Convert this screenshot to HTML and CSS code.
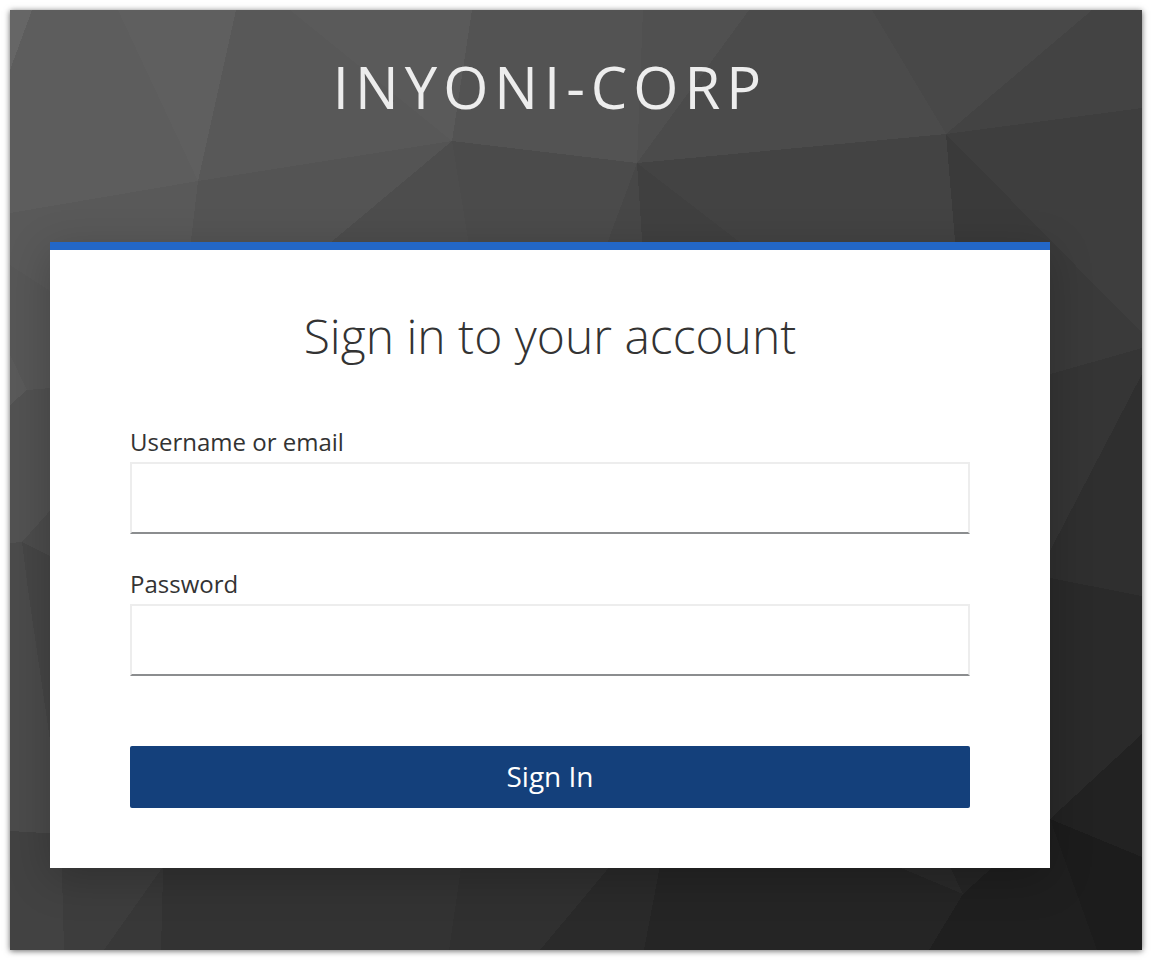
FILE: index.html
```html
<!DOCTYPE html>
<html lang="en">
<head>
<meta charset="utf-8">
<meta name="viewport" content="width=device-width, initial-scale=1">
<title>Sign in to INYONI-CORP</title>
<link rel="stylesheet" href="styles.css">
</head>
<body>
<div class="login-page">
  <svg class="backdrop" viewBox="10 10 1132 940" preserveAspectRatio="xMidYMid slice" shape-rendering="crispEdges" aria-hidden="true">
    <rect x="10" y="10" width="1132" height="940" fill="#3a3a3a"/>
    <!-- upper facets -->
    <path fill="#666666" d="M10 10H32L10 70Z"/>
    <path fill="#5d5d5d" d="M32 10H118L198 181L10 213V70Z"/>
    <path fill="#5f5f5f" d="M118 10H236L198 181Z"/>
    <path fill="#585858" d="M236 10H290L452 141L198 181Z"/>
    <path fill="#5a5a5a" d="M290 10H472L452 141Z"/>
    <path fill="#535353" d="M472 10H643L637 163L452 141Z"/>
    <path fill="#505050" d="M643 10H749L637 163Z"/>
    <path fill="#4b4b4b" d="M749 10H872L946 134L637 163Z"/>
    <path fill="#484848" d="M872 10H1092L946 134Z"/>
    <path fill="#434343" d="M1092 10H1142V108L946 134Z"/>
    <path fill="#595959" d="M10 213L198 181L188 300H64L10 265Z"/>
    <path fill="#545454" d="M198 181L452 141L262 300H184Z"/>
    <path fill="#4d4d4d" d="M452 141L262 300H478Z"/>
    <path fill="#4b4b4b" d="M452 141L637 163L586 300H478Z"/>
    <path fill="#474747" d="M637 163L586 300H646Z"/>
    <path fill="#404040" d="M637 163L646 300H815Z"/>
    <path fill="#434343" d="M637 163L946 134L960 300H815Z"/>
    <!-- right facets -->
    <path fill="#3a3a3a" d="M946 134L1142 333V348L1040 377L960 300Z"/>
    <path fill="#3e3e3e" d="M946 134L1142 108V333Z"/>
    <path fill="#353535" d="M1040 377L1142 348V374L1040 570Z"/>
    <path fill="#2f2f2f" d="M1142 374V596L1040 576V570Z"/>
    <path fill="#2a2a2a" d="M1040 576L1142 596V734L1050 819H1040Z"/>
    <path fill="#222222" d="M1050 819L1142 734V857Z"/>
    <path fill="#1c1c1c" d="M1050 819L1142 857V950H1097Z"/>
    <!-- left facets -->
    <path fill="#575757" d="M10 265L64 300V387L27 390L10 355Z"/>
    <path fill="#5a5a5a" d="M10 355L27 390L10 405Z"/>
    <path fill="#525252" d="M10 405L27 390L64 387V495L22 542L10 543Z"/>
    <path fill="#4c4c4c" d="M22 542L64 495V563Z"/>
    <path fill="#464646" d="M22 542L64 563V834H60L50 740L28 590Z"/>
    <path fill="#4b4b4b" d="M10 543L22 542L28 590L50 740L60 834L10 831Z"/>
    <!-- lower facets -->
    <path fill="#424242" d="M10 831L61 834L64 950H10Z"/>
    <path fill="#3d3d3d" d="M61 834H187L104 950H64Z"/>
    <path fill="#383838" d="M187 834H164L162 868L104 950H161Z"/>
    <path fill="#333333" d="M164 834H466L449 950H161Z"/>
    <path fill="#303030" d="M466 834H637L540 950H449Z"/>
    <path fill="#2a2a2a" d="M637 834H666L644 950H540Z"/>
    <path fill="#252525" d="M666 834H820L963 894L929 950H644Z"/>
    <path fill="#2a2a2a" d="M820 834H934L963 894Z"/>
    <path fill="#252525" d="M934 834H1029L963 894Z"/>
    <path fill="#1f1f1f" d="M963 894L1029 834L1050 819L1097 950H929Z"/>
  </svg>

  <header class="brand">INYONI-CORP</header>

  <main class="card">
    <h1 class="card-title">Sign in to your account</h1>
    <form class="login-form">
      <div class="field">
        <label class="field-label" for="username">Username or email</label>
        <input class="field-input" id="username" name="username" type="text" autocomplete="username">
      </div>
      <div class="field">
        <label class="field-label" for="password">Password</label>
        <input class="field-input" id="password" name="password" type="password" autocomplete="current-password">
      </div>
      <button class="submit" type="submit">Sign In</button>
    </form>
  </main>
</div>
</body>
</html>
```
FILE: styles.css
```css
*,
*::before,
*::after {
  box-sizing: border-box;
}

body {
  margin: 0;
  padding: 10px;
  background: #fff;
  color: #333;
  font-family: "Open Sans", "Noto Sans", sans-serif;
}

.login-page {
  position: relative;
  isolation: isolate;
  min-height: calc(100vh - 20px);
  padding: 0 92px 82px 40px;
  box-shadow: 0 1px 6px rgba(0, 0, 0, 0.6);
}

.backdrop {
  position: absolute;
  inset: 0;
  z-index: -1;
  width: 100%;
  height: 100%;
}

.brand {
  padding: 39px 0 117px;
  color: #ededed;
  font-size: 58px;
  line-height: 76px;
  letter-spacing: 6px;
  text-align: center;
  text-transform: uppercase;
}

.card {
  max-width: 1000px;
  margin: 0 auto;
  padding: 55px 80px 60px;
  border-top: 8px solid #2367c7;
  background: #fff;
  box-shadow: 0 10px 40px rgba(0, 0, 0, 0.22);
}

.card-title {
  margin: 0 0 59px;
  font-size: 48px;
  font-weight: 300;
  line-height: 62px;
  text-align: center;
}

.login-form {
  display: flex;
  flex-direction: column;
}

.field {
  display: flex;
  flex-direction: column;
  gap: 4px;
  margin-bottom: 34px;
}

.field-label {
  font-size: 24px;
  line-height: 32px;
}

.field-input {
  width: 100%;
  height: 72px;
  padding: 0 16px;
  border: 2px solid #ededed;
  border-bottom-color: #8b8d8f;
  border-radius: 0;
  background: #fff;
  color: inherit;
  font: inherit;
  font-size: 28px;
}

.submit {
  margin-top: 36px;
  padding: 9px 32px 11px;
  border: 0;
  border-radius: 2px;
  background: #14407b;
  color: #fff;
  font: inherit;
  font-size: 28px;
  line-height: 42px;
  cursor: pointer;
}
```
